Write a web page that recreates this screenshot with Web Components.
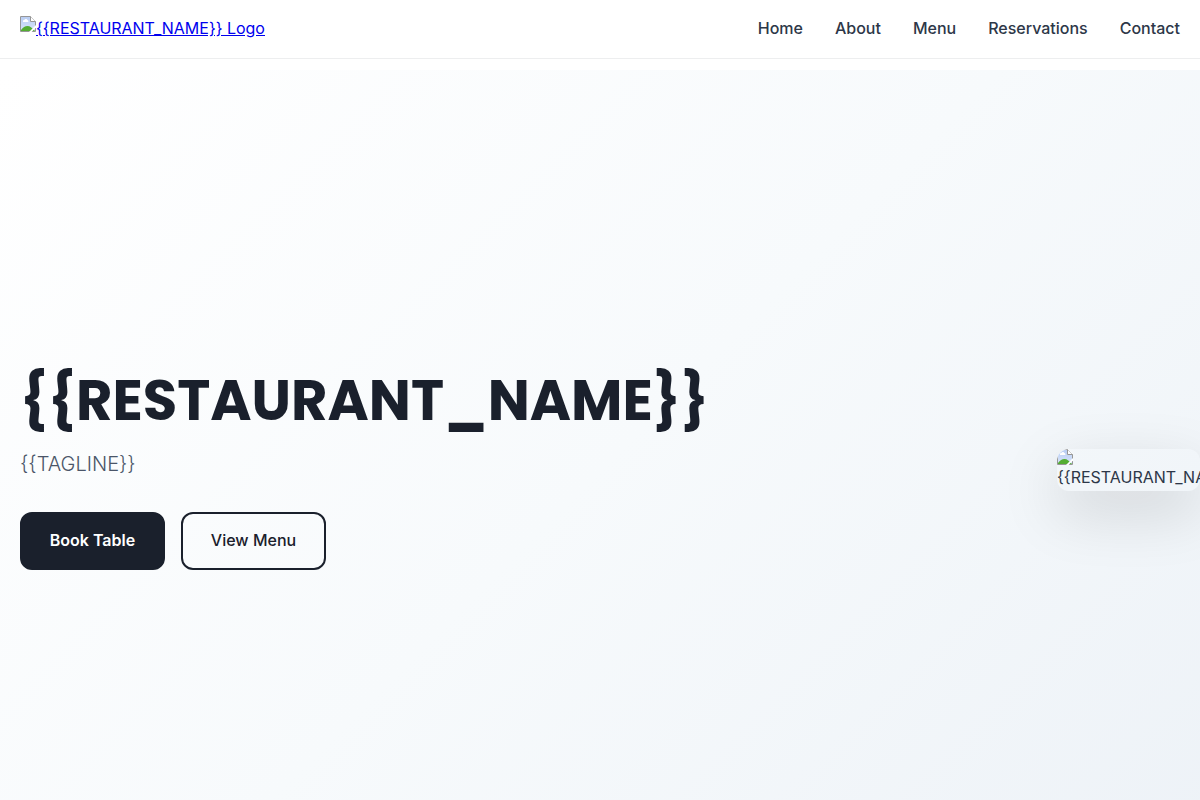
<!DOCTYPE html>
<html lang="en">
<head>
<meta charset="utf-8">
<title>{{RESTAURANT_NAME}}</title>
<style>
html,body{margin:0;height:100%;overflow:hidden;background:#fff}
body{font:16px/1.6 Inter,sans-serif;color:#2d3748;-webkit-font-smoothing:antialiased}
</style>
</head>
<body>
<site-header>
  <missing-image slot="brand" inline>{{RESTAURANT_NAME}} Logo</missing-image>
  <nav-link>Home</nav-link><nav-link>About</nav-link><nav-link>Menu</nav-link><nav-link>Reservations</nav-link><nav-link>Contact</nav-link>
</site-header>
<hero-section>
  <span slot="title">{{RESTAURANT_NAME}}</span>
  <span slot="tagline">{{TAGLINE}}</span>
  <action-button slot="actions" primary>Book Table</action-button>
  <action-button slot="actions">View Menu</action-button>
  <missing-image slot="media">{{RESTAURANT_NAME}}</missing-image>
</hero-section>
<script>
const define = (name, html) => customElements.define(name, class extends HTMLElement {
  constructor() { super(); this.attachShadow({mode: 'open'}).innerHTML = html; }
});
define('site-header', `<style>
:host{display:flex;align-items:center;justify-content:space-between;box-sizing:border-box;height:59px;padding:0 20px;border-bottom:1px solid #edeeef;background:#fff}
a{display:block;color:#0000ee;text-decoration:underline}
nav{display:flex;gap:32px;padding-bottom:2px}
</style><a href="#"><slot name="brand"></slot></a><nav><slot></slot></nav>`);
define('nav-link', `<style>
:host{display:block}
a{color:#2d3748;font-weight:500;line-height:26px;text-decoration:none;display:block}
</style><a href="#"><slot></slot></a>`);
define('missing-image', `<style>
:host{display:block;box-sizing:border-box;width:143px;height:42px;border-radius:12px;overflow:hidden;line-height:25.6px;white-space:nowrap}
:host([inline]){display:flex;width:auto;height:26px;border-radius:0;overflow:visible;text-decoration:underline}
svg{display:block;width:16px;height:16px;flex:none}
span{display:block}
:host([inline]) span{text-decoration:underline;letter-spacing:-.02px}
</style><svg viewBox="0 0 16 16">
<defs><linearGradient id="sky" x2="0" y2="1"><stop stop-color="#b9cdf3"/><stop offset="1" stop-color="#d8e5fa"/></linearGradient></defs>
<path d="M0 0h11l5 5v11H0z" fill="#fff"/>
<path d="M1 1h9.500v5H15v9H1z" fill="url(#sky)"/>
<path d="M3 6V5c0-.7.700-1 1.300-1C4.800 2.500 7 2.600 7.300 4 8.300 4 8.500 5 8.300 6z" fill="#fff"/>
<path d="M1 15v-1c2-2.500 4-4 6.500-4s5 2 7.500 5z" fill="#54ad32"/>
<path d="M.5 15.500V.5h10l5 5v10z" fill="none" stroke="#969696"/>
<path d="M10.500.5v5h5" fill="#fff" stroke="#969696"/>
<path d="M9 16l7-7v2.600L11.600 16z" fill="#fff"/>
</svg><span><slot></slot></span>`);
define('hero-section', `<style>
:host{display:flex;align-items:center;justify-content:space-between;box-sizing:border-box;height:800px;margin-top:11px;padding-left:20px;background:linear-gradient(135deg,#fff 0%,#f7fafc 50%,#edf2f7 100%)}
h1{margin:0 0 16px;font:700 56px/61.6px Poppins,Inter,sans-serif;color:#1a202c;white-space:nowrap}
p{margin:0 0 32px;font-size:20px;line-height:32px;font-weight:350;color:#4a5568}
.actions{display:flex;gap:16px}
.media{border-radius:12px;box-shadow:0 20px 60px rgba(0,0,0,.15)}
</style><div><h1><slot name="title"></slot></h1><p><slot name="tagline"></slot></p><div class="actions"><slot name="actions"></slot></div></div>
<div class="media"><slot name="media"></slot></div>`);
define('action-button', `<style>
:host{display:block}
a{display:flex;align-items:center;justify-content:center;box-sizing:border-box;width:145px;height:58px;border:2px solid #1a202c;border-radius:12px;font-weight:600;color:#1a202c;text-decoration:none}
:host([primary]) a{background:#1a202c;color:#fff}
:host(:not([primary])) a{font-weight:500}
</style><a href="#"><slot></slot></a>`);
</script>
</body>
</html>
